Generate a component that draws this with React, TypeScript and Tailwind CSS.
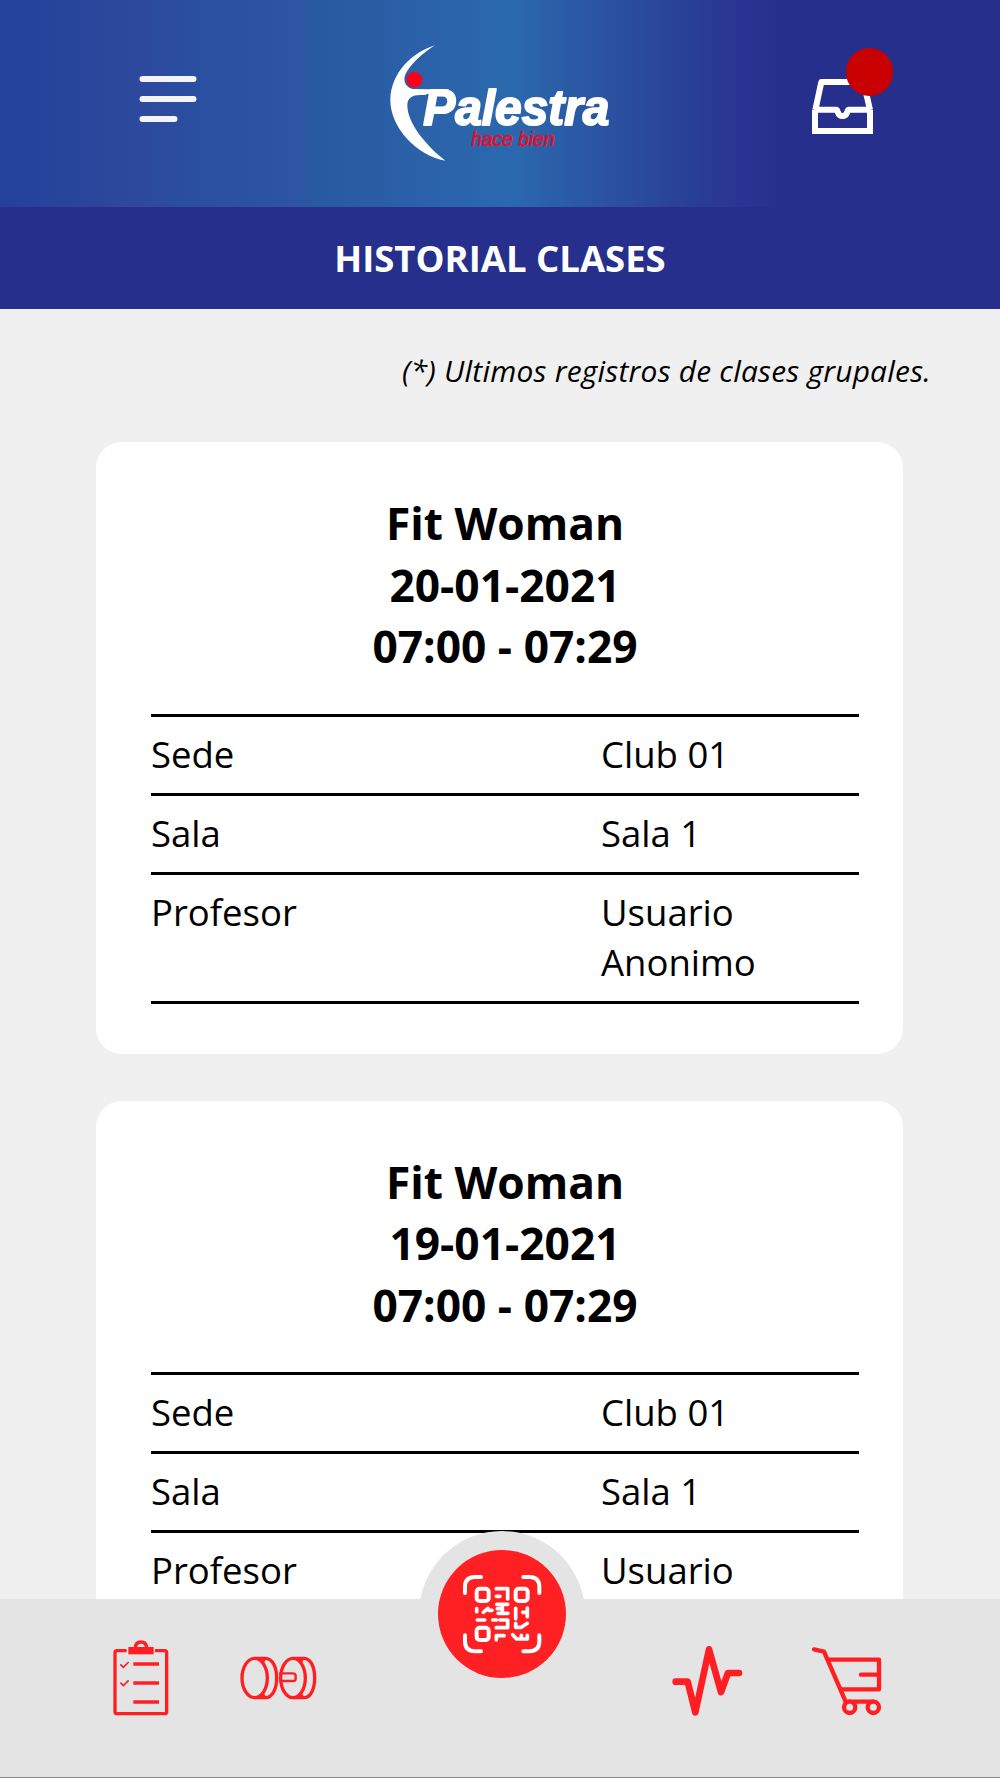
import { ReactNode } from 'react'

interface ClassRecord {
    name: string
    date: string
    time: string
    sede: string
    sala: string
    profesor: string
}

const records: ClassRecord[] = [
    { name: 'Fit Woman', date: '20-01-2021', time: '07:00 - 07:29', sede: 'Club 01', sala: 'Sala 1', profesor: 'Usuario Anonimo' },
    { name: 'Fit Woman', date: '19-01-2021', time: '07:00 - 07:29', sede: 'Club 01', sala: 'Sala 1', profesor: 'Usuario Anonimo' },
]

function MenuIcon() {
    return (
        <svg className="w-[58px] h-[48px]" viewBox="0 0 58 48" fill="none" stroke="#f4f4f8" strokeWidth="6" strokeLinecap="round">
            <path d="M3.5 4H54.5M3.5 24H54.5M3.5 44H35.5" />
        </svg>
    )
}

function Logo() {
    return (
        <svg className="w-[260px] h-[140px]" viewBox="0 0 780 420">
            <path
                d="M195 46C128 66 62 128 61 210C61 292 138 376 226 392C172 350 112 282 112 226C112 204 128 195 150 195L168 195L172 180L128 177C108 172 99 156 105 136C120 102 158 70 195 46Z"
                fill="#fff"
            />
            <path d="M120 178H235V192H120Z" fill="#fff" />
            <circle cx="133" cy="149" r="23.500" fill="#ff0018" />
            <text
                x="160"
                y="285"
                textLength="558"
                lengthAdjust="spacingAndGlyphs"
                fill="#fff"
                stroke="#fff"
                strokeWidth="6"
                strokeLinejoin="round"
                className="font-['Liberation_Sans',sans-serif] text-[150px] font-bold italic"
            >
                Palestra
            </text>
            <text
                x="304"
                y="347"
                textLength="250"
                lengthAdjust="spacingAndGlyphs"
                fill="#f00a26"
                stroke="#f00a26"
                strokeWidth="1.500"
                className="font-['Liberation_Sans',sans-serif] text-[58px] italic"
            >
                hace bien
            </text>
        </svg>
    )
}

function InboxIcon() {
    return (
        <svg className="w-[61px] h-[55px]" viewBox="66 147 183 165" fill="none" stroke="#fff" strokeWidth="18">
            <path d="M76 240L94 156H221L240 240" strokeLinejoin="round" />
            <path d="M75 239V303H240V239" />
            <path d="M75 239H138Q142 239 143 246Q147 258 157.500 258Q168 258 172 246Q173 239 177 239H240" strokeLinejoin="round" />
        </svg>
    )
}

function ClipboardIcon() {
    return (
        <svg className="w-[56px] h-[76px]" viewBox="68 59 168 228" fill="none" stroke="#ff1f23" strokeWidth="10">
            <path d="M109 91H80Q74 91 74 97V274Q74 280 80 280H223Q229 280 229 274V97Q229 91 223 91H194" />
            <path d="M114 80H190V102H114Z" fill="#ff1f23" stroke="none" />
            <path d="M135 84Q135 65 152 65Q169 65 169 84" />
            <path d="M129 131H206M129 188H206M129 245H206" />
            <path d="M90 132L99 141L115 125M90 187L99 196L115 180" strokeWidth="5" />
        </svg>
    )
}

function DumbbellIcon() {
    return (
        <svg className="w-[77px] h-[44px]" viewBox="452 107 231 132" fill="none" stroke="#ff1f23" strokeWidth="10">
            <ellipse cx="496" cy="173" rx="38" ry="59" />
            <path d="M496 114H528C550 114 562 142 562 173C562 204 550 232 528 232H496" />
            <path d="M508 116L524 128L530 116ZM508 230L524 218L530 230Z" fill="#ff1f23" stroke="none" />
            <ellipse cx="611" cy="173" rx="37" ry="59" />
            <path d="M611 114H644C665 114 676 142 676 173C676 204 665 232 644 232H611" />
            <path d="M622 116L638 128L644 116ZM622 230L638 218L644 230Z" fill="#ff1f23" stroke="none" />
            <path d="M570 159H610Q619 159 619 166V175Q619 182 610 182H570" strokeWidth="7" />
        </svg>
    )
}

function PulseIcon() {
    return (
        <svg className="w-[71px] h-[71px]" viewBox="68 76 213 213" fill="none" stroke="#ff1f23" strokeWidth="20" strokeLinecap="round" strokeLinejoin="round">
            <path d="M79 186H115L138 278L179 89L215 217L236 160H269" />
        </svg>
    )
}

function CartIcon() {
    return (
        <svg className="w-[71px] h-[70px]" viewBox="482 79 213 210" fill="none" stroke="#ff1f23" strokeWidth="13" strokeLinejoin="round">
            <path d="M491 89L521 96L586 246H669" strokeLinecap="round" />
            <path d="M533 120H686V209H569" />
            <path d="M686 165H632" strokeLinecap="round" />
            <circle cx="598" cy="263" r="17" fill="#e4e4e4" />
            <circle cx="669" cy="263" r="17" fill="#e4e4e4" />
        </svg>
    )
}

function QrIcon() {
    return (
        <svg className="w-[80px] h-[80px]" viewBox="156 163 240 240" fill="none" stroke="#fff" strokeWidth="12" strokeLinecap="round" strokeLinejoin="round">
            <path d="M165 220V202Q165 172 195 172H213M340 172H358Q388 172 388 202V220M388 347V365Q388 395 358 395H340M213 395H195Q165 395 165 365V347" />
            <rect x="200" y="207" width="36" height="37" rx="9" />
            <rect x="317" y="207" width="36" height="37" rx="9" />
            <rect x="200" y="324" width="36" height="37" rx="9" />
            <g strokeWidth="11">
                <path d="M259 207H293V238M259 230H270" />
                <path d="M200 267V276M220 278L234 266M236 272H246M202 301H224M248 301H260" />
                <path d="M260 254H293M277 255V281M264 281H294M262 267H275M293 301V324H259M270 301H293M259 360V348H282" />
                <path d="M317 266V297M338 278H352M352 265V291" />
                <path d="M317 311V323H334L352 311M308 345L320 358H352V347M334 347V356" />
            </g>
        </svg>
    )
}

function Row({ label, children }: { label: string; children: ReactNode }) {
    return (
        <div className="flex border-b-[3px] border-black pt-3 pb-[13.400px] text-[36.500px] leading-[50.700px]">
            <span className="w-[450px]">{label}</span>
            <span className="flex-1 pr-10">{children}</span>
        </div>
    )
}

function ClassCard({ record }: { record: ClassRecord }) {
    return (
        <article className="shrink-0 h-[611.500px] rounded-[26px] bg-white pl-[55px] pr-[44px] pt-[51px]">
            <h2 className="h-[220.500px] text-center text-[44.300px] leading-[61.700px] font-bold">
                {record.name}
                <br />
                {record.date}
                <br />
                {record.time}
            </h2>
            <div className="border-t-[3px] border-black">
                <Row label="Sede">{record.sede}</Row>
                <Row label="Sala">{record.sala}</Row>
                <Row label="Profesor">{record.profesor}</Row>
            </div>
        </article>
    )
}

export default function App() {
    return (
        <div className="flex flex-col w-[1000px] h-[1778px] overflow-hidden bg-[#f0f0f0] text-black font-['Open_Sans',sans-serif]">
            <header className="shrink-0 flex items-start h-[207px] pl-[139px] bg-[linear-gradient(90deg,#24419a_0px,#2d4a9e_150px,#2a4ea0_185px,#2d55a4_300px,#27599f_310px,#2b62aa_430px,#2a69ae_510px,#2a60a8_550px,#2b52a1_610px,#293f97_690px,#2b3492_740px,#26308c_785px)]">
                <div className="pt-[75px]">
                    <MenuIcon />
                </div>
                <div className="pt-[30px] pl-[173px]">
                    <Logo />
                </div>
                <div className="relative pt-[79px] ml-[182px]">
                    <InboxIcon />
                    <span className="absolute left-[33.500px] top-[48px] size-[47.500px] rounded-full bg-[#c80000]" />
                </div>
            </header>
            <h1 className="shrink-0 flex items-center justify-center h-[102px] bg-[#26308c] text-white text-[36.500px] font-bold">
                HISTORIAL CLASES
            </h1>

            <main className="flex-1 min-h-0 overflow-hidden flex flex-col">
                <p className="shrink-0 h-[133px] pt-[42px] pr-[69px] text-right text-[29.900px] leading-[40px] tracking-[0.230px] italic">
                    (*) Ultimos registros de clases grupales.
                </p>
                <div className="flex flex-col gap-[47px] pl-[96px] pr-[97px]">
                    {records.map((record) => (
                        <ClassCard key={record.date} record={record} />
                    ))}
                </div>
            </main>

            <nav className="relative shrink-0 flex items-start h-[179px] border-b border-[#8c8c8c] bg-[#e4e4e4]">
                <div className="pl-[113px] pt-[41px]">
                    <ClipboardIcon />
                </div>
                <div className="pl-[71px] pt-[57px]">
                    <DumbbellIcon />
                </div>
                <div className="pl-[355px] pt-[46px]">
                    <PulseIcon />
                </div>
                <div className="pl-[68px] pt-[47px]">
                    <CartIcon />
                </div>
                <button className="absolute left-[418.500px] top-[-68px] flex items-center justify-center size-[166px] rounded-full bg-[#e4e4e4]">
                    <span className="flex items-center justify-center size-[128px] rounded-full bg-[#ff2023]">
                        <QrIcon />
                    </span>
                </button>
            </nav>
        </div>
    )
}
